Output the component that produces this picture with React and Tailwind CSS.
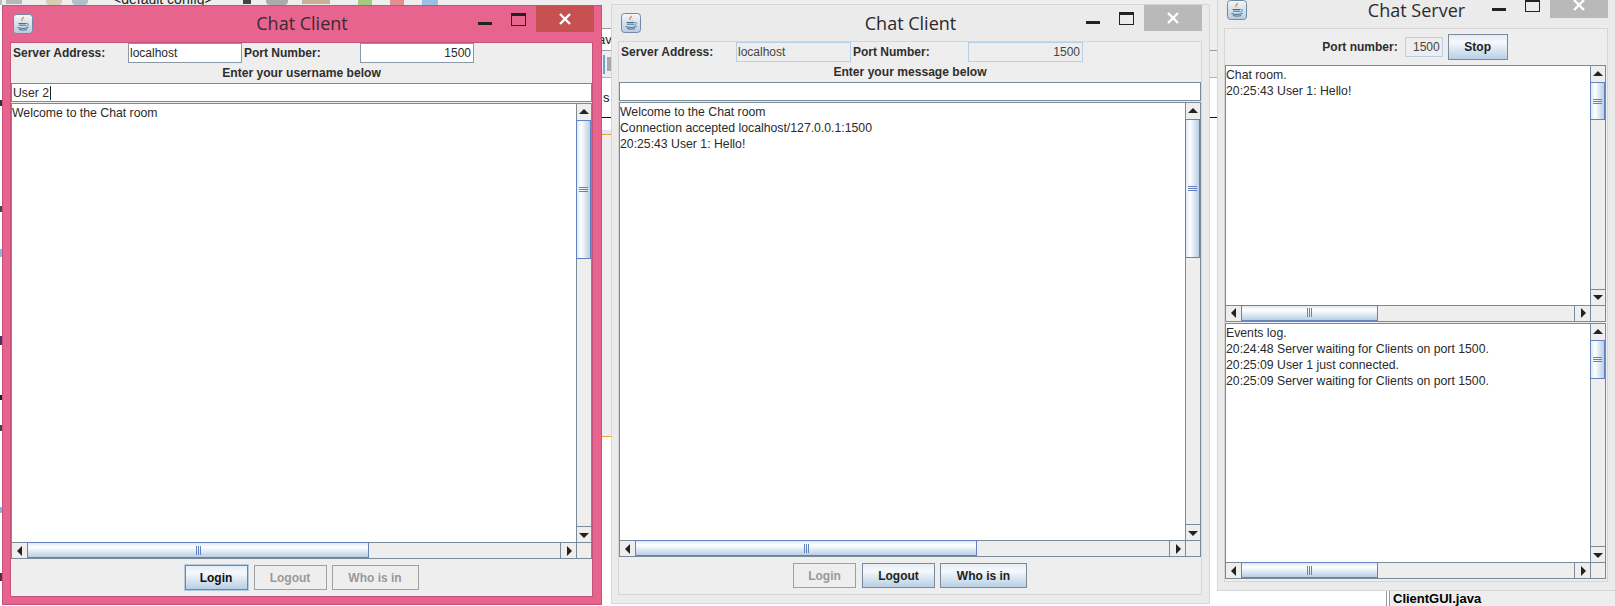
import React from "react";

const JavaIcon = () => (
  <svg width="20" height="20" viewBox="0 0 20 20" className="block">
    <defs>
      <linearGradient id="tile" x1="0" y1="0" x2="0" y2="1">
        <stop offset="0" stopColor="#f4f7fa" />
        <stop offset="1" stopColor="#b9cbdc" />
      </linearGradient>
    </defs>
    <rect x="0.5" y="0.5" width="19" height="19" rx="3" fill="url(#tile)" stroke="#6f8aa3" />
    <path d="M10.5 2.5c1.5 2-2.5 3-1 5.5-1.8-1.4-1.6-3 1-5.5zM12.5 5c-1.5 1-2 1.8-.8 3-.9-.2-1.4-1.800.8-3z" fill="#e0762a" />
    <path d="M5.500 9.500h8M6 11.200h7" stroke="#3f6f94" strokeWidth="1" fill="none" />
    <path d="M14 9.500c2 0 2 2.200-.6 2.600" stroke="#3f6f94" strokeWidth="0.800" fill="none" />
    <path d="M4.500 13.500c3 1.200 8 1.200 11 0M6 15.500c2.500.8 6 .8 8 0" stroke="#3f6f94" strokeWidth="1" fill="none" />
  </svg>
);

const Arrow = ({ dir }) => {
  const d = {
    up: "M0 7 L5 2 L10 7 Z",
    down: "M0 3 L10 3 L5 8 Z",
    left: "M7 0 L7 10 L2 5 Z",
    right: "M3 0 L8 5 L3 10 Z",
  }[dir];
  return (
    <svg width="10" height="10" viewBox="0 0 10 10" className="block">
      <path d={d} fill="#222" />
    </svg>
  );
};

const ArrowBtn = ({ dir, className }) => (
  <div className={`flex shrink-0 items-center justify-center bg-[#eeeeee] border-[#7a8a99] ${className}`}>
    <Arrow dir={dir} />
  </div>
);

const VBar = ({ thumb }) => (
  <div className="flex w-[15px] flex-col bg-[#eeeeee] border-l border-[#7a8a99]">
    <ArrowBtn dir="up" className="h-[16px]" />
    <div className={`-ml-px flex shrink-0 flex-col items-center justify-center gap-[1px] border border-[#6382bf] bg-gradient-to-r from-[#dde8f3] via-[#ffffff] via-30% to-[#b8cfe5] ${thumb}`}>
      <div className="h-px w-[9px] bg-[#6382bf]" />
      <div className="h-px w-[9px] bg-[#6382bf]" />
      <div className="h-px w-[9px] bg-[#6382bf]" />
    </div>
    <div className="flex-1" />
    <ArrowBtn dir="down" className="h-[16px] border-t" />
  </div>
);

const HBar = ({ thumb }) => (
  <div className="flex h-[16px] bg-[#eeeeee] border-t border-[#7a8a99]">
    <ArrowBtn dir="left" className="w-[15px]" />
    <div className={`-mt-px flex shrink-0 flex-row items-center justify-center gap-[1px] border border-[#6382bf] bg-gradient-to-b from-[#dde8f3] via-[#ffffff] via-30% to-[#b8cfe5] ${thumb}`}>
      <div className="h-[9px] w-px bg-[#6382bf]" />
      <div className="h-[9px] w-px bg-[#6382bf]" />
      <div className="h-[9px] w-px bg-[#6382bf]" />
    </div>
    <div className="flex-1" />
    <ArrowBtn dir="right" className="w-[16px] border-l" />
  </div>
);

const Pane = ({ lines, vThumb, hThumb, className }) => (
  <div className={`grid min-h-0 grid-cols-[1fr_15px] grid-rows-[1fr_16px] border border-[#7a8a99] bg-[#eeeeee] ${className}`}>
    <div className="overflow-hidden bg-white pt-px text-[12.25px] leading-[16px] text-[#2a2a2a]">
      {lines.map((l) => (
        <div key={l}>{l}</div>
      ))}
    </div>
    <VBar thumb={vThumb} />
    <HBar thumb={hThumb} />
    <div className="border-l border-t border-[#7a8a99] bg-[#eeeeee]" />
  </div>
);

const JBtn = ({ children, kind, className }) => {
  const look = {
    focus: "border-[#6d87a3] outline outline-1 outline-[#b4cbe0] bg-gradient-to-b from-[#e4ecf4] via-[#f6f9fc] via-30% to-[#b8cfe5] text-[#111]",
    on: "border-[#7a8a99] bg-gradient-to-b from-[#e4ecf4] via-[#f6f9fc] via-30% to-[#b8cfe5] text-[#222]",
    off: "border-[#a0a0a0] bg-[#eeeeee] text-[#999999]",
  }[kind];
  return (
    <div className={`flex items-center justify-center border text-[12px] font-bold ${look} ${className}`}>
      {children}
    </div>
  );
};

const Controls = ({ closeBg, rowClass }) => (
  <div className={`flex justify-end ${rowClass}`}>
    <div className="mt-[16px] mr-[19px] h-[3px] w-[14px] bg-[#222]" />
    <div className="mt-[7px] mr-[10px] h-[13px] w-[15px] border border-t-[3px] border-[#222]" />
    <div className={`flex h-[26px] w-[58px] items-center justify-center ${closeBg}`}>
      <svg width="12" height="12" viewBox="0 0 12 12">
        <path d="M1 1 L11 11 M11 1 L1 11" stroke="#fff" strokeWidth="2.400" />
      </svg>
    </div>
  </div>
);

const TitleBar = ({ title, closeBg, color, heightClass, rowClass, iconClass, titleClass }) => (
  <div className={`grid grid-cols-[1fr_auto_1fr] ${heightClass}`}>
    <div className={iconClass}>
      <JavaIcon />
    </div>
    <div className={`self-center text-[18px] leading-[20px] ${color} ${titleClass}`} style={{ fontFamily: '"Open Sans", sans-serif' }}>
      {title}
    </div>
    <Controls closeBg={closeBg} rowClass={rowClass} />
  </div>
);

const Field = ({ children, right, disabled, className }) => (
  <div
    className={`flex items-center overflow-hidden border px-px text-[12px] ${right ? "justify-end pr-[2px]" : ""} ${
      disabled ? "border-[#b8cfe5] bg-[#eeeeee] text-[#444]" : "border-[#8b98a5] bg-white text-[#2a2a2a]"
    } ${className}`}
  >
    {children}
  </div>
);

const ClientBody = ({ disabled, prompt, input, caret, lines, panelClass, firstW, secondW, fieldW, gapRow, login, others }) => (
  <div className={`flex flex-col bg-[#eeeeee] ${panelClass}`}>
    <div className="flex h-[20px] shrink-0 items-stretch">
      <div className={`flex items-center pl-[2px] text-[12px] font-bold text-[#2e2e2e] ${firstW}`}>Server Address:</div>
      <Field disabled={disabled} className={fieldW}>localhost</Field>
      <div className={`flex items-center pl-[2px] text-[12px] font-bold text-[#2e2e2e] ${secondW}`}>Port Number:</div>
      <Field disabled={disabled} right className={fieldW}>1500</Field>
    </div>
    <div className="flex h-[20px] shrink-0 items-center justify-center text-[12.1px] font-bold text-[#2e2e2e]">{prompt}</div>
    <div className={`flex h-[19px] shrink-0 items-center border border-[#7a8a99] bg-white pl-px pt-px text-[12.25px] text-[#2a2a2a] ${gapRow}`}>
      {input}
      {caret && <span className="ml-px h-[14px] w-px bg-[#222]" />}
    </div>
    <Pane lines={lines} vThumb="h-[139px]" hThumb="w-[342px]" className="flex-1" />
    <div className="flex h-[37px] shrink-0 items-center justify-center gap-[5px]">
      <JBtn kind={login} className="mr-[1px] h-[25px] w-[63px]">Login</JBtn>
      <JBtn kind={others} className="h-[25px] w-[73px]">Logout</JBtn>
      <JBtn kind={others} className="h-[25px] w-[87px]">Who is in</JBtn>
    </div>
  </div>
);

const Mark = ({ className }) => <div className={`w-[2px] shrink-0 ${className}`} />;

const IdeBackdrop = () => (
  <div className="flex h-full w-full">
    <div className="flex w-[2px] shrink-0 flex-col">
      <Mark className="h-[5px] bg-[#bdbdbd]" />
      <Mark className="mt-[95px] h-[6px] bg-[#333]" />
      <Mark className="mt-[100px] h-[6px] bg-[#445]" />
      <Mark className="mt-[37px] h-[8px] bg-[#7fc0e8]" />
      <Mark className="mt-[79px] h-[9px] bg-[#503060]" />
      <Mark className="mt-[50px] h-[5px] bg-[#222]" />
      <Mark className="mt-[25px] h-[6px] bg-[#444]" />
      <Mark className="mt-[76px] h-[6px] bg-[#88b8d8]" />
      <Mark className="mt-[60px] h-[8px] bg-[#702030]" />
    </div>
    <div className="flex w-[1208px] shrink-0 flex-col">
      <div className="flex h-[28px] shrink-0 items-start overflow-hidden bg-[#eeeeee]">
        <div className="ml-[4px] h-[4px] w-[16px] bg-[#b8b8b8]" />
        <div className="ml-[24px] h-[5px] w-[16px] rounded-b bg-[#d8cdb0]" />
        <div className="ml-[10px] h-[5px] w-[16px] rounded-b bg-[#b4bec6]" />
        <div className="-mt-[8px] ml-[25px] w-[118px] text-[14px] leading-[14px] text-[#222]">&lt;default config&gt;</div>
        <div className="ml-[12px] h-[4px] w-[8px] bg-[#444]" />
        <div className="ml-[15px] h-[5px] w-[22px] rounded-b bg-[#aaa]" />
        <div className="ml-[14px] h-[4px] w-[28px] bg-[#c8b098]" />
        <div className="ml-[28px] h-[5px] w-[14px] bg-[#a0cc80]" />
        <div className="ml-[18px] h-[5px] w-[14px] bg-[#e09090]" />
        <div className="ml-[18px] h-[5px] w-[16px] bg-[#9cc0e0]" />
      </div>
      <div className="h-[22px] shrink-0 border-t border-[#9a9a9a] bg-white pl-[596px] text-[13px] leading-[22px] text-[#222]">av</div>
      <div className="flex h-[27px] shrink-0 items-center border-t border-[#9a9a9a] bg-[#eeeeee] pl-[601px]">
        <div className="h-[19px] w-[2px] bg-[#6f9fd8]" />
        <div className="ml-[2px] h-[14px] w-[8px] bg-[#a8a8a8]" />
      </div>
      <div className="h-[40px] shrink-0 border-t border-[#9db4d6] bg-white pl-[601px] pt-[13px] text-[13px] leading-[14px] text-[#111]">s</div>
      <div className="h-[13px] shrink-0 border-t border-[#111] bg-white" />
      <div className="h-[4px] shrink-0 bg-[#e4e4f8]" />
      <div className="h-[302px] shrink-0 border-t border-[#f0a030] bg-[#eeeeee]" />
      <div className="flex-1 border-t border-[#f0a030] bg-white" />
    </div>
    <div className="flex flex-1 flex-col">
      <div className="h-[50px] shrink-0 bg-[#eeeeee]" />
      <div className="h-[27px] shrink-0 border-t border-[#9a9a9a] bg-[#eeeeee]" />
      <div className="h-[40px] shrink-0 border-t border-[#9db4d6] bg-white" />
      <div className="flex-1 border-t border-[#111] bg-white" />
      <div className="flex h-[15px] shrink-0 bg-white pl-[176px]">
        <div className="h-full w-[4px] border-x border-[#999]" />
        <div className="flex-1 bg-[#eeeeee] pl-[3px] text-[13px] font-bold leading-[15px] text-black">ClientGUI.java</div>
      </div>
    </div>
  </div>
);

export default function App() {
  return (
    <div
      className="relative h-[606px] w-[1615px] overflow-hidden bg-white"
      style={{ fontFamily: '"Liberation Sans", Arial, sans-serif' }}
    >
      <IdeBackdrop />

      {/* Focused client */}
      <div className="absolute left-[2px] top-[5px] flex h-[600px] w-[600px] flex-col border border-[#c4527b] bg-[#e7648f]">
        <TitleBar
          title="Chat Client"
          closeBg="bg-[#c75050]"
          color="text-[#3a2a33]"
          heightClass="h-[36px] shrink-0"
          rowClass="pr-[7px]"
          iconClass="pl-[10px] pt-[8px]"
          titleClass="pb-[3px]"
        />
        <div className="ml-[7px] mr-[8px] flex h-[555px] flex-col border border-[#c4527b]">
          <ClientBody
            prompt="Enter your username below"
            input="User 2"
            caret
            lines={["Welcome to the Chat room"]}
            panelClass="h-full"
            firstW="w-[117px]"
            secondW="w-[118px]"
            fieldW="w-[114px]"
            gapRow="mb-[1px]"
            login="focus"
            others="off"
          />
        </div>
      </div>

      {/* Second client */}
      <div className="absolute left-[611px] top-[4px] flex h-[600px] w-[599px] flex-col border border-[#d6d6d6] bg-[#ebebeb]">
        <TitleBar
          title="Chat Client"
          closeBg="bg-[#b9b9b9]"
          color="text-[#2a2a2a]"
          heightClass="h-[36px] shrink-0"
          rowClass="pr-[7px]"
          iconClass="pl-[9px] pt-[8px]"
          titleClass=""
        />
        <div className="ml-[6px] mr-[7px] flex h-[554px] flex-col border border-[#d6d6d6]">
          <ClientBody
            disabled
            prompt="Enter your message below"
            input=""
            lines={["Welcome to the Chat room", "Connection accepted localhost/127.0.0.1:1500", "20:25:43 User 1: Hello!"]}
            panelClass="h-full"
            firstW="w-[117px]"
            secondW="w-[117px]"
            fieldW="w-[115px]"
            gapRow="mb-[1px]"
            login="off"
            others="on"
          />
        </div>
      </div>

      {/* Server */}
      <div className="absolute left-[1217px] top-[-9px] flex h-[600px] w-[399px] flex-col border border-[#d6d6d6] bg-[#ebebeb]">
        <TitleBar
          title="Chat Server"
          closeBg="bg-[#b9b9b9]"
          color="text-[#2a2a2a]"
          heightClass="h-[36px] shrink-0"
          rowClass="pr-[7px]"
          iconClass="pl-[9px] pt-[8px]"
          titleClass=""
        />
        <div className="ml-[6px] mr-[7px] flex h-[554px] flex-col border border-[#d6d6d6] bg-[#eeeeee] pr-px">
          <div className="flex h-[36px] shrink-0 items-center justify-center pr-[1px]">
            <div className="mr-[7px] text-[12px] font-bold text-[#2e2e2e]">Port number:</div>
            <Field disabled right className="h-[20px] w-[38px]">1500</Field>
            <JBtn kind="on" className="ml-[5px] h-[26px] w-[60px]">Stop</JBtn>
          </div>
          <div className="flex min-h-0 flex-1 flex-col gap-px">
            <Pane
              lines={["Chat room.", "20:25:43 User 1: Hello!"]}
              vThumb="h-[38px]"
              hThumb="w-[137px]"
              className="flex-1"
            />
            <Pane
              lines={[
                "Events log.",
                "20:24:48 Server waiting for Clients on port 1500.",
                "20:25:09 User 1 just connected.",
                "20:25:09 Server waiting for Clients on port 1500.",
              ]}
              vThumb="h-[39px]"
              hThumb="w-[137px]"
              className="flex-1"
            />
          </div>
          <div className="h-[2px] shrink-0" />
        </div>
      </div>
    </div>
  );
}
